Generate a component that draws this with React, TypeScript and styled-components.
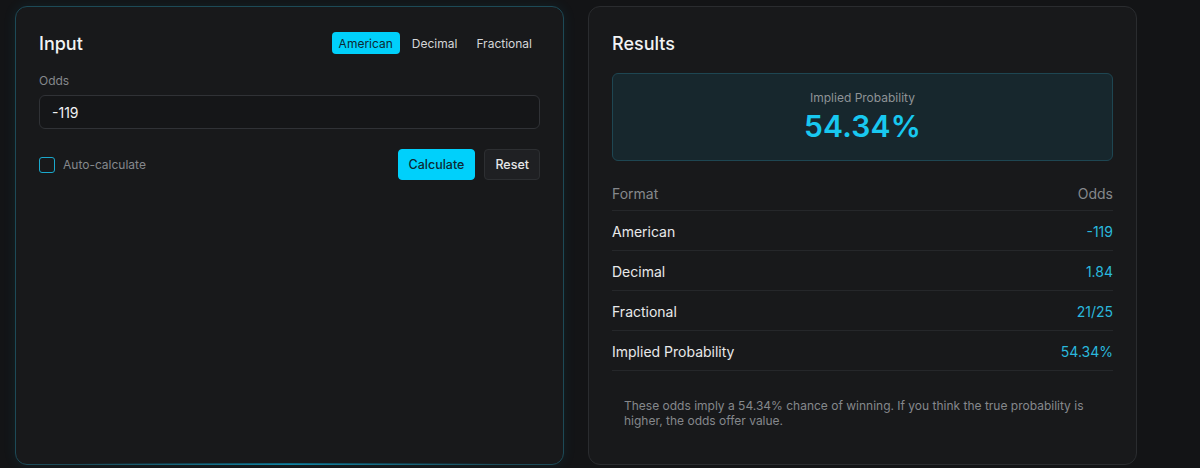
import React, { useState } from "react";
import styled, { createGlobalStyle } from "styled-components";

const GlobalStyle = createGlobalStyle`
  html, body {
    margin: 0;
    padding: 0;
    background: #131416;
    font-family: Inter, "Liberation Sans", sans-serif;
  }
  * {
    box-sizing: border-box;
  }
`;

const Page = styled.div`
  display: flex;
  gap: 24px;
  padding: 6px 15px 3px;
  height: 468px;
  background: #131416;
`;

const Card = styled.div<{ $glow?: boolean }>`
  position: relative;
  width: ${(p) => (p.$glow ? "549px" : "549px")};
  height: 459px;
  padding: 23px;
  border-radius: 12px;
  background: #18191b;
  border: 1px solid ${(p) => (p.$glow ? "#1d4a57" : "#2a2c2f")};
  box-shadow: ${(p) =>
    p.$glow ? "0 0 14px rgba(0, 190, 240, 0.08)" : "none"};
  display: flex;
  flex-direction: column;

  &::after {
    content: "";
    display: ${(p) => (p.$glow ? "block" : "none")};
    position: absolute;
    left: 60px;
    right: 60px;
    bottom: -1px;
    height: 2px;
    background: linear-gradient(
      90deg,
      rgba(0, 200, 255, 0) 0%,
      rgba(0, 200, 255, 0.45) 50%,
      rgba(0, 200, 255, 0) 100%
    );
  }
`;

const Header = styled.div`
  display: flex;
  align-items: center;
  justify-content: space-between;
  height: 26px;
`;

const Title = styled.h2`
  margin: 0;
  font-size: 18px;
  font-weight: 500;
  color: #f2f3f4;
`;

const Tabs = styled.div`
  display: flex;
  gap: 5px;
  margin-right: 1px;
`;

const Tab = styled.button<{ $active?: boolean }>`
  height: 22px;
  padding: 0 7px;
  border: none;
  border-radius: 4px;
  font-family: inherit;
  font-size: 12px;
  cursor: pointer;
  background: ${(p) => (p.$active ? "#00d0fb" : "transparent")};
  color: ${(p) => (p.$active ? "#0d2a33" : "#d4d6d8")};
`;

const Label = styled.div`
  margin-top: 17px;
  font-size: 12px;
  line-height: 16px;
  color: #85888c;
`;

const Input = styled.input`
  margin-top: 6px;
  width: 100%;
  height: 34px;
  padding: 0 12px;
  border-radius: 6px;
  border: 1px solid #303236;
  background: #151618;
  color: #f0f1f2;
  font-family: inherit;
  font-size: 14px;
  outline: none;
`;

const Actions = styled.div`
  margin-top: 20px;
  display: flex;
  align-items: center;
  justify-content: space-between;
`;

const CheckLabel = styled.label`
  display: flex;
  align-items: center;
  gap: 8px;
  font-size: 12px;
  color: #85888c;
`;

const Box = styled.span`
  width: 16px;
  height: 16px;
  border-radius: 3px;
  border: 1.5px solid #1aa8cc;
`;

const Buttons = styled.div`
  display: flex;
  gap: 9px;
`;

const Button = styled.button<{ $primary?: boolean }>`
  height: 31px;
  padding: 0 10px;
  border-radius: 4px;
  font-family: inherit;
  font-size: 12.5px;
  font-weight: 500;
  cursor: pointer;
  border: 1px solid ${(p) => (p.$primary ? "#00d0fb" : "#2d2f32")};
  background: ${(p) => (p.$primary ? "#00d0fb" : "#1f2023")};
  color: ${(p) => (p.$primary ? "#0d2a33" : "#e6e7e8")};
`;

const Highlight = styled.div`
  margin-top: 17px;
  height: 88px;
  border-radius: 6px;
  border: 1px solid #1e4652;
  background: #17272d;
  display: flex;
  flex-direction: column;
  align-items: center;
  padding-top: 16px;
`;

const HighlightLabel = styled.div`
  font-size: 12px;
  line-height: 16px;
  color: #8e9396;
`;

const HighlightValue = styled.div`
  margin-top: 2px;
  font-size: 30px;
  line-height: 36px;
  font-weight: 600;
  color: #18c8f0;
  letter-spacing: 0.2px;
`;

const Table = styled.div`
  margin-top: 15px;
  display: flex;
  flex-direction: column;
`;

const Row = styled.div<{ $head?: boolean }>`
  display: flex;
  justify-content: space-between;
  align-items: center;
  height: ${(p) => (p.$head ? "35px" : "40px")};
  padding-top: ${(p) => (p.$head ? "0" : "1px")};
  border-bottom: 1px solid #25272a;
  font-size: 14px;
  color: ${(p) => (p.$head ? "#85888c" : "#e8e9ea")};
`;

const Value = styled.span`
  color: #2ab8dd;
`;

const Note = styled.p`
  margin: 15px 0 0;
  padding: 12px;
  font-size: 12px;
  line-height: 15px;
  color: #85888c;
`;

const rows = [
  { label: "American", value: "-119" },
  { label: "Decimal", value: "1.84" },
  { label: "Fractional", value: "21/25" },
  { label: "Implied Probability", value: "54.34%" },
];

export default function App() {
  const [format, setFormat] = useState("American");
  return (
    <>
      <GlobalStyle />
      <Page>
        <Card $glow>
          <Header>
            <Title>Input</Title>
            <Tabs>
              {["American", "Decimal", "Fractional"].map((f) => (
                <Tab key={f} $active={f === format} onClick={() => setFormat(f)}>
                  {f}
                </Tab>
              ))}
            </Tabs>
          </Header>
          <Label>Odds</Label>
          <Input defaultValue="-119" />
          <Actions>
            <CheckLabel>
              <Box />
              Auto-calculate
            </CheckLabel>
            <Buttons>
              <Button $primary>Calculate</Button>
              <Button>Reset</Button>
            </Buttons>
          </Actions>
        </Card>
        <Card>
          <Header>
            <Title>Results</Title>
          </Header>
          <Highlight>
            <HighlightLabel>Implied Probability</HighlightLabel>
            <HighlightValue>54.34%</HighlightValue>
          </Highlight>
          <Table>
            <Row $head>
              <span>Format</span>
              <span>Odds</span>
            </Row>
            {rows.map((r) => (
              <Row key={r.label}>
                <span>{r.label}</span>
                <Value>{r.value}</Value>
              </Row>
            ))}
          </Table>
          <Note>
            These odds imply a 54.34% chance of winning. If you think the true
            probability is higher, the odds offer value.
          </Note>
        </Card>
      </Page>
    </>
  );
}
